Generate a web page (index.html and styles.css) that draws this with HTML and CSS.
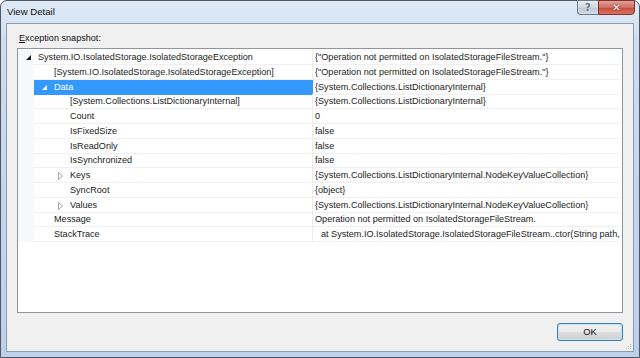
FILE: index.html
```html
<!DOCTYPE html>
<html lang="en">
<head>
<meta charset="utf-8" />
<title>View Detail</title>
<link rel="stylesheet" href="styles.css">
</head>
<body>
<div class="window">
  <div class="titlebar">
    <span class="title">View Detail</span>
    <div class="caption-btns">
      <span class="cap-btn help">?</span>
      <span class="cap-btn close">&#x2715;</span>
    </div>
  </div>
  <div class="client">
    <label class="snap-label"><u>E</u>xception snapshot:</label>
    <div class="tree">
      <div class="row"><div class="gut"></div><div class="name lv0"><span class="exp open"><svg width="6" height="6"><path d="M5 0V5H0Z" fill="#1a1a1a"/></svg></span>System.IO.IsolatedStorage.IsolatedStorageException</div><div class="val">{"Operation not permitted on IsolatedStorageFileStream."}</div></div>
      <div class="row"><div class="gut"></div><div class="name lv1">[System.IO.IsolatedStorage.IsolatedStorageException]</div><div class="val">{"Operation not permitted on IsolatedStorageFileStream."}</div></div>
      <div class="row sel"><div class="gut"></div><div class="name lv1"><span class="exp open"><svg width="6" height="6"><path d="M5 0V5H0Z" fill="#fff"/></svg></span>Data</div><div class="val">{System.Collections.ListDictionaryInternal}</div></div>
      <div class="row"><div class="gut"></div><div class="name lv2">[System.Collections.ListDictionaryInternal]</div><div class="val">{System.Collections.ListDictionaryInternal}</div></div>
      <div class="row"><div class="gut"></div><div class="name lv2">Count</div><div class="val">0</div></div>
      <div class="row"><div class="gut"></div><div class="name lv2">IsFixedSize</div><div class="val">false</div></div>
      <div class="row"><div class="gut"></div><div class="name lv2">IsReadOnly</div><div class="val">false</div></div>
      <div class="row"><div class="gut"></div><div class="name lv2">IsSynchronized</div><div class="val">false</div></div>
      <div class="row"><div class="gut"></div><div class="name lv2"><span class="exp"><svg width="6" height="8"><path d="M0.5 0.5L4.5 4L0.5 7.5Z" fill="none" stroke="#a6a6a6"/></svg></span>Keys</div><div class="val">{System.Collections.ListDictionaryInternal.NodeKeyValueCollection}</div></div>
      <div class="row"><div class="gut"></div><div class="name lv2">SyncRoot</div><div class="val">{object}</div></div>
      <div class="row"><div class="gut"></div><div class="name lv2"><span class="exp"><svg width="6" height="8"><path d="M0.5 0.5L4.5 4L0.5 7.5Z" fill="none" stroke="#a6a6a6"/></svg></span>Values</div><div class="val">{System.Collections.ListDictionaryInternal.NodeKeyValueCollection}</div></div>
      <div class="row"><div class="gut"></div><div class="name lv1">Message</div><div class="val">Operation not permitted on IsolatedStorageFileStream.</div></div>
      <div class="row"><div class="gut"></div><div class="name lv1">StackTrace</div><div class="val trace">at System.IO.IsolatedStorage.IsolatedStorageFileStream..ctor(String path,</div></div>
    </div>
    <div class="footer">
      <button class="ok">OK</button>
    </div>
    <svg class="grip" width="7" height="7"><g fill="#b5b9bf"><rect x="5" y="1" width="1" height="1"/><rect x="3" y="3" width="1" height="1"/><rect x="5" y="3" width="1" height="1"/><rect x="1" y="5" width="1" height="1"/><rect x="3" y="5" width="1" height="1"/><rect x="5" y="5" width="1" height="1"/></g></svg>
  </div>
</div>
</body>
</html>
```

FILE: styles.css
```css
*{box-sizing:border-box;}
body{
  margin:0;
  background:#fff;
  font-family:'Liberation Sans',Arial,sans-serif;
  font-size:9.1px;
  color:#1b1b1b;
}
.window{
  width:640px;
  height:358px;
  border:1px solid #4f5661;
  border-radius:7px 7px 0 0;
  background:linear-gradient(#dfeaf6,#cfdeef 40px,#c2d6ec 200px,#bdd2ea);
  display:flex;
  flex-direction:column;
  position:relative;
}
.titlebar{height:22px;display:flex;align-items:flex-start;padding-left:6px;}
.title{font-size:9.6px;line-height:22px;color:#111;}
.caption-btns{margin-left:auto;margin-right:4px;margin-top:-1px;display:flex;}
.cap-btn{
  height:15px;
  display:flex;align-items:center;justify-content:center;
  border:1px solid #6c7a8a;
  font-family:'DejaVu Sans',sans-serif;
  font-weight:bold;
  color:#fff;
}
.help{
  width:21px;
  border-right:none;
  border-radius:0 0 0 4px;
  font-size:10px;
  color:#6a7585;
  background:linear-gradient(#e9eef4,#cdd7e3 50%,#bcc9d8 51%,#d4dde8);
}
.close{
  width:37px;
  border-color:#7b3230;
  border-radius:0 0 4px 0;
  font-size:10px;
  background:linear-gradient(#e3a299,#d16d60 50%,#c34a3b 51%,#d8735f);
  text-shadow:0 0 2px #5a1a12;
}
.client{
  flex:1;
  margin:0 5px 5px;
  border:1px solid #8c9bad;
  background:#f0f0f0;
  display:flex;
  flex-direction:column;
  padding:0 10px 10px 10px;
  position:relative;
}
.snap-label{display:block;margin:7px 0 0 2px;line-height:14px;height:14px;color:#111;}
.snap-label u{text-decoration-thickness:1px;text-underline-offset:1px;}
.tree{
  flex:1;
  margin-top:3px;
  background:#fff;
  border:1px solid #8f959c;
  padding-top:1px;
  overflow:hidden;
}
.row{
  display:grid;
  grid-template-columns:16px 279px 1fr;
  height:14.75px;
  line-height:14px;
  white-space:nowrap;
}
.gut{background:#f6f8fb;}
.name,.val{border-bottom:1px solid #f0f0f0;}
.name{border-right:1px solid #ececec;padding-left:4px;}
.name.lv1{padding-left:20px;}
.name.lv2{padding-left:36px;}
.val{padding-left:2px;overflow:hidden;margin-right:1px;}
.val.trace{padding-left:8px;}
.sel .name{background:#3399ff;color:#fff;border-right-color:#3399ff;border-bottom-color:#3399ff;}
.exp{display:inline-block;width:16px;margin-left:-16px;padding-left:4px;vertical-align:top;}
.exp svg{display:block;margin-top:4px;}
.exp.open svg{margin-top:5px;}
.footer{display:flex;justify-content:flex-end;margin-top:10px;}
.ok{
  width:66px;
  height:18px;
  border:1px solid #3c7fb1;
  border-radius:3px;
  background:linear-gradient(#f2f2f2,#ebebeb 50%,#dddddd 51%,#cfcfcf);
  box-shadow:inset 0 0 0 1px #bfe6f6;
  font-family:'Liberation Sans',Arial,sans-serif;
  font-size:9.4px;
  color:#111;
  padding:0;
  line-height:14px;
}
.grip{position:absolute;right:1px;bottom:1px;}
```
